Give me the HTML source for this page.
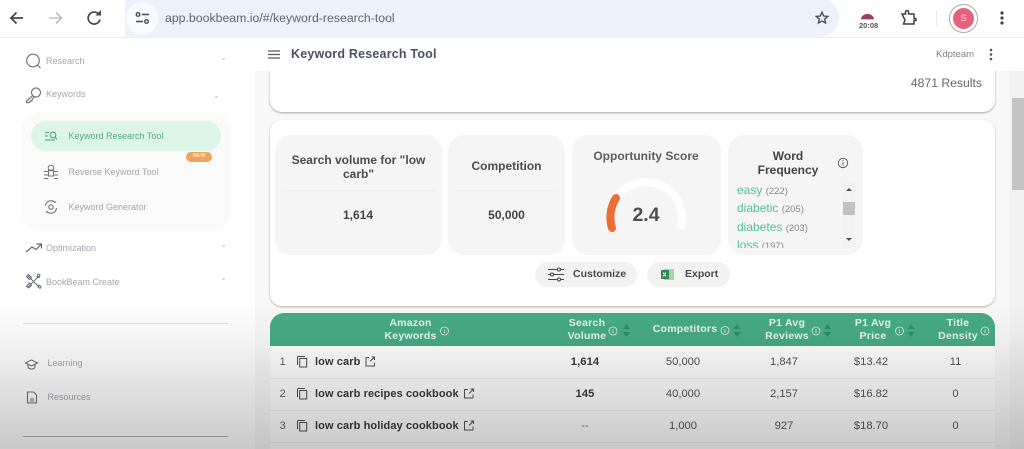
<!DOCTYPE html>
<html><head><meta charset="utf-8">
<style>
*{box-sizing:border-box;margin:0;padding:0}
html,body{width:1024px;height:449px;overflow:hidden;background:#fff;font-family:"Liberation Sans",sans-serif}
#root{position:relative;width:1024px;height:449px;overflow:hidden;filter:blur(.35px)}
.a{position:absolute}
.t{position:absolute;white-space:nowrap;line-height:1}
.c{position:absolute;white-space:nowrap;line-height:1;transform:translateX(-50%);text-align:center}
.stat{position:absolute;background:#f5f5f5;border-radius:16px;top:135px;height:120px}
.h{color:#eaf6f1;font-weight:700;font-size:10.5px;line-height:12.5px;letter-spacing:.25px}
.n{color:#555;font-size:11.2px}
.k{color:#3a3a3a;font-size:11px;font-weight:700;letter-spacing:.1px}
.side{color:#a2a6ae;font-size:9px}
svg{position:absolute;overflow:visible}
</style></head><body>
<div id="root">
<!-- main bg -->
<div class="a" style="left:255px;top:71px;width:755px;height:378px;background:#f8f8f8"></div>
<div class="a" style="left:1010px;top:71px;width:14px;height:378px;background:#f2f2f2"></div>
<div class="a" style="left:1012px;top:98px;width:12px;height:92px;background:#c4c4c4"></div>

<!-- card 1 -->
<div class="a" style="left:270px;top:40px;width:725px;height:72px;background:#fff;border-radius:0 0 12px 12px;box-shadow:0 1px 2px rgba(0,0,0,.35)"></div>
<div class="a" style="left:255px;top:38px;width:769px;height:33px;background:#fff"></div>
<div class="t" style="right:42px;top:77px;font-size:12.200px;color:#666">4871 Results</div>

<!-- browser bar -->
<div class="a" style="left:0;top:0;width:1024px;height:38px;background:#fff;border-bottom:1px solid #eceef0"></div>
<div class="a" style="left:125px;top:-2px;width:714px;height:39px;background:#edf2fa;border-radius:0 20px 20px 0"></div>
<div class="a" style="left:126px;top:2px;width:32px;height:33px;background:#f9fafc;border-radius:50%"></div>
<svg style="left:0;top:0" width="120" height="38" fill="none">
<path d="M23 18H11M16.500 12.500 11 18l5.500 5.500" stroke="#444" stroke-width="1.700"/>
<path d="M61 18H49M56 12.500 61.500 18 56 23.500" stroke="#b3b6ba" stroke-width="1.300"/>
<path d="M99 14.500A6 6 0 1 0 100 19.500" stroke="#444" stroke-width="1.700"/>
<path d="M95.500 15.500h5.500V10z" fill="#444"/>
</svg>
<svg style="left:135px;top:11px" width="16" height="14" fill="none" stroke="#454b54" stroke-width="1.400">
<circle cx="3" cy="3.500" r="1.800"/><path d="M7 3.500h7M1 10.500h7"/><circle cx="11.500" cy="10.500" r="1.800"/>
</svg>
<div class="t" style="left:165px;top:11.500px;font-size:12.300px;color:#5c6673">app.bookbeam.io/#/keyword-research-tool</div>
<svg style="left:815px;top:11px" width="14" height="14" fill="none"><path d="M7 1.200 8.700 5l4.100.4-3.100 2.700.9 4L7 10l-3.600 2.100.9-4L1.200 5.400 5.300 5z" stroke="#46494e" stroke-width="1.300"/></svg>
<svg style="left:858px;top:11px" width="20" height="10"><path d="M3 8.500A6.500 5.500 0 0 1 16 8.500z" fill="#9b3e55"/><path d="M3 8.500h13" stroke="#c7c7c7"/></svg>
<div class="t" style="left:859px;top:21.500px;font-size:7.500px;font-weight:700;color:#555">20:08</div>
<svg style="left:900px;top:9px" width="18" height="18" fill="none"><path d="M2 5h3.500V3a1.500 1.500 0 0 1 3 0v2H14v4.500h2v2h-2V15H3.500L5 11 2 5z" stroke="#3e4146" stroke-width="1.500"/></svg>
<div class="a" style="left:936px;top:10px;width:1px;height:16px;background:#e8e9ea"></div>
<div class="a" style="left:949px;top:4px;width:29px;height:29px;border-radius:50%;background:#fff;border:1px solid #aaa"></div>
<div class="a" style="left:953px;top:8px;width:21px;height:21px;border-radius:50%;background:#e8607f"></div>
<div class="c" style="left:963.500px;top:14px;font-size:9.500px;color:#f8dbe2">S</div>
<svg style="left:999px;top:11px" width="6" height="15" fill="#3d4043"><circle cx="3" cy="2" r="1.600"/><circle cx="3" cy="7" r="1.600"/><circle cx="3" cy="12" r="1.600"/></svg>

<!-- header -->
<svg style="left:268px;top:50px" width="12" height="10" stroke="#565c6b" stroke-width="1.200"><path d="M0 1h12M0 4.500h12M0 8h12"/></svg>
<div class="t" style="left:291px;top:48px;font-size:12.500px;font-weight:700;color:#4a5067;letter-spacing:.2px">Keyword Research Tool</div>
<div class="t" style="left:936px;top:49.500px;font-size:9.500px;color:#7b7f86">Kdpteam</div>
<svg style="left:988px;top:48px" width="6" height="13" fill="#50545c"><circle cx="3" cy="2" r="1.300"/><circle cx="3" cy="6.500" r="1.300"/><circle cx="3" cy="11" r="1.300"/></svg>

<!-- card 2 -->
<div class="a" style="left:270px;top:120px;width:725px;height:186px;background:#fff;border-radius:12px;box-shadow:0 1px 2px rgba(0,0,0,.3)"></div>

<div class="stat" style="left:275px;width:167px"></div>
<div class="stat" style="left:448px;width:117px"></div>
<div class="stat" style="left:572px;width:149px"></div>
<div class="stat" style="left:728px;width:135px"></div>

<div class="c" style="left:358.500px;top:153px;font-size:12px;font-weight:700;color:#4b4b4b;line-height:14px">Search volume for "low<br>carb"</div>
<div class="a" style="left:281px;top:190px;width:155px;height:1px;background:#efefef"></div>
<div class="c" style="left:358px;top:209px;font-size:12px;font-weight:700;color:#444">1,614</div>
<div class="c" style="left:506.500px;top:160px;font-size:12px;font-weight:700;color:#4b4b4b">Competition</div>
<div class="a" style="left:455px;top:190px;width:103px;height:1px;background:#efefef"></div>
<div class="c" style="left:506.500px;top:209px;font-size:12px;font-weight:700;color:#444">50,000</div>

<div class="c" style="left:646px;top:150px;font-size:12px;font-weight:700;color:#5e5e5e">Opportunity Score</div>
<svg style="left:0;top:0" width="1024" height="449" fill="none">
<path d="M611.700 229A36 36 0 1 1 680.300 229" stroke="#fff" stroke-width="8"/>
<path d="M612 228A36 36 0 0 1 616 198" stroke="#ee6c35" stroke-width="8" stroke-linecap="round"/>
</svg>
<div class="c" style="left:646px;top:206px;font-size:19.500px;font-weight:700;color:#4f4f4f">2.4</div>

<div class="c" style="left:788px;top:149px;font-size:12px;font-weight:700;color:#424242;line-height:14px">Word<br>Frequency</div>
<svg style="left:837px;top:157px" width="12" height="12" fill="none" stroke="#555" stroke-width=".9"><circle cx="6" cy="6" r="4.700"/><path d="M6 5.300v3.200M6 3.300v1"/></svg>
<div class="a" style="left:732px;top:182px;width:110px;height:66px;overflow:hidden">
<div class="t" style="left:5px;top:2px;font-size:12px;color:#55bd9e">easy <span style="font-size:9.500px;color:#888">(222)</span></div>
<div class="t" style="left:5px;top:20px;font-size:12px;color:#55bd9e">diabetic <span style="font-size:9.500px;color:#888">(205)</span></div>
<div class="t" style="left:5px;top:38.500px;font-size:12px;color:#55bd9e">diabetes <span style="font-size:9.500px;color:#888">(203)</span></div>
<div class="t" style="left:5px;top:57px;font-size:12px;color:#55bd9e">loss <span style="font-size:9.500px;color:#888">(197)</span></div>
</div>
<div class="a" style="left:843px;top:183px;width:12px;height:64px;background:#f2f2f2"></div>
<div class="a" style="left:843px;top:202px;width:12px;height:13px;background:#c1c1c1"></div>
<svg style="left:845px;top:186px" width="8" height="56" fill="#505050"><path d="M1 5h6L4 2zM1 52h6l-3 3z"/></svg>

<!-- buttons -->
<div class="a" style="left:535px;top:262px;width:102px;height:25px;background:#f2f2f2;border-radius:13px"></div>
<div class="a" style="left:647px;top:262px;width:83px;height:25px;background:#f2f2f2;border-radius:13px"></div>
<svg style="left:548px;top:267px" width="16" height="15" fill="#fff" stroke="#444" stroke-width="1"><path d="M0 2.500h16M0 7.500h16M0 12.500h16"/><circle cx="11" cy="2.500" r="1.500"/><circle cx="4" cy="7.500" r="1.500"/><circle cx="11" cy="12.500" r="1.500"/></svg>
<div class="t" style="left:573px;top:269px;font-size:10.500px;font-weight:700;color:#4a4a4a">Customize</div>
<svg style="left:661px;top:268px" width="13" height="13"><rect x="3" y="1" width="10" height="11" fill="#a8d2b4"/><rect x="0" y="2" width="8" height="9" fill="#2f8a4d"/><path d="M2 4.500l3 4M5 4.500l-3 4" stroke="#fff" stroke-width=".9"/></svg>
<div class="t" style="left:685px;top:269px;font-size:10.500px;font-weight:700;color:#4a4a4a">Export</div>

<!-- table -->
<div class="a" style="left:270px;top:346px;width:725px;height:103px;background:#fff"></div>
<div class="a" style="left:270px;top:378px;width:725px;height:1px;background:#f0f0f0"></div>
<div class="a" style="left:270px;top:410px;width:725px;height:1px;background:#f0f0f0"></div>
<div class="a" style="left:270px;top:442px;width:725px;height:1px;background:#f0f0f0"></div>
<div class="a" style="left:270px;top:313px;width:725px;height:33px;background:#47ab85;border-radius:14px 14px 0 0"></div>

<div class="c h" style="left:410.500px;top:317px">Amazon<br>Keywords</div>
<div class="c h" style="left:587px;top:317px">Search<br>Volume</div>
<div class="c h" style="left:685px;top:323px">Competitors</div>
<div class="c h" style="left:787px;top:317px">P1 Avg<br>Reviews</div>
<div class="c h" style="left:873px;top:317px">P1 Avg<br>Price</div>
<div class="c h" style="left:958px;top:317px">Title<br>Density</div>

<svg style="left:0;top:0" width="1024" height="449" fill="none" stroke="#dff1ea" stroke-width=".8">
<circle cx="444.500" cy="331" r="4"/><path d="M444.500 329.500v3.500"/>
<circle cx="613" cy="331" r="4"/><path d="M613 329.500v3.500"/>
<circle cx="725" cy="330.500" r="4"/><path d="M725 329v3.500"/>
<circle cx="816" cy="331" r="4"/><path d="M816 329.500v3.500"/>
<circle cx="899.500" cy="331" r="4"/><path d="M899.500 329.500v3.500"/>
<circle cx="985" cy="331" r="4"/><path d="M985 329.500v3.500"/>
<g fill="#2f8b68" stroke="none">
<path d="M623 329h7l-3.500-5zM623 332h7l-3.500 5z"/>
<path d="M733.500 329h7l-3.500-5zM733.500 332h7l-3.500 5z"/>
<path d="M824 329h7l-3.500-5zM824 332h7l-3.500 5z"/>
<path d="M907.500 329h7l-3.500-5zM907.500 332h7l-3.500 5z"/>
</g>
</svg>

<!-- rows -->
<div class="t n" style="left:279.500px;top:357px;color:#666">1</div>
<div class="t n" style="left:279.500px;top:389px;color:#666">2</div>
<div class="t n" style="left:279.500px;top:421px;color:#666">3</div>
<svg style="left:0;top:0" width="1024" height="449" fill="none" stroke="#4e4e4e" stroke-width="1">
<path d="M298 356.500h7M297.500 365v-8.500"/><rect x="299.700" y="358.500" width="7" height="8.500"/>
<path d="M298 388.500h7M297.500 397v-8.500"/><rect x="299.700" y="390.500" width="7" height="8.500"/>
<path d="M298 420.500h7M297.500 429v-8.500"/><rect x="299.700" y="422.500" width="7" height="8.500"/>
<g stroke="#555">
<path d="M369 357.500h-3v8.500h8.500V362.500M370 361.500l4.500-4.500M371.500 357h3v3"/>
<path d="M468 389.500h-3.500v8.500h8.500V394.500M469 393.500l4.500-4.500M470.500 389h3v3"/>
<path d="M468 421.500h-3.500v8.500h8.500V426.500M469 425.500l4.500-4.500M470.500 421h3v3"/>
</g>
</svg>
<div class="t k" style="left:315px;top:357px">low carb</div>
<div class="t k" style="left:315px;top:389px">low carb recipes cookbook</div>
<div class="t k" style="left:315px;top:421px">low carb holiday cookbook</div>

<div class="c k" style="left:585px;top:357px;font-size:11.200px">1,614</div>
<div class="c k" style="left:585px;top:389px;font-size:11.200px">145</div>
<div class="c k" style="left:585px;top:421px;font-weight:400;color:#666">--</div>

<div class="c n" style="left:683px;top:357px">50,000</div>
<div class="c n" style="left:683px;top:389px">40,000</div>
<div class="c n" style="left:683px;top:421px">1,000</div>
<div class="c n" style="left:784px;top:357px">1,847</div>
<div class="c n" style="left:784px;top:389px">2,157</div>
<div class="c n" style="left:784px;top:421px">927</div>
<div class="c n" style="left:871px;top:357px">$13.42</div>
<div class="c n" style="left:871px;top:389px">$16.82</div>
<div class="c n" style="left:871px;top:421px">$18.70</div>
<div class="c n" style="left:955.500px;top:357px">11</div>
<div class="c n" style="left:955.500px;top:389px">0</div>
<div class="c n" style="left:955.500px;top:421px">0</div>

<!-- sidebar -->
<svg style="left:0;top:0" width="255" height="449" fill="none" stroke="#6d7480" stroke-width="1.200">
<circle cx="33" cy="60.500" r="6.300"/><path d="M37.500 65l3 3"/>
<circle cx="36" cy="92.500" r="4.500"/><path d="M32.800 95.700l-6.300 5.300v1.500h3l1-1.500h1.500v-1.500l2.500-2.500"/>
<path d="M222 58.500l1.500 1 1.500-1M215 97.500l1.500-1 1.500 1" stroke="#b6babf" stroke-width=".8"/>
<path d="M222 245.500l1.500 1 1.500-1M222 278.500l1.500 1 1.500-1" stroke="#b6babf" stroke-width=".8"/>
</svg>
<div class="t side" style="left:46px;top:56.500px">Research</div>
<div class="t side" style="left:46px;top:90px">Keywords</div>

<div class="a" style="left:22px;top:112px;width:208px;height:119px;background:#fafafa;border-radius:18px"></div>
<div class="a" style="left:31px;top:121px;width:190px;height:30px;background:#dcf5e7;border-radius:15px"></div>
<svg style="left:0;top:0" width="255" height="449" fill="none">
<g stroke="#4ca57e" stroke-width="1.100"><path d="M45 132.500h4M45 136h3M45 140h10"/><circle cx="53" cy="135" r="2.800"/><path d="M55 137l2 2.500"/></g>
<g stroke="#6b7280" stroke-width="1"><circle cx="51" cy="168" r="2.800"/><rect x="48.500" y="170" width="5" height="6"/><path d="M44 171.500h4M44 175h4M44 178.500h4M54 171.500h4M54 175h4M54 178.500h4"/></g>
<g stroke="#6b7280" stroke-width="1.100"><circle cx="51" cy="207" r="2.200"/><path d="M45.500 206a5.500 5.500 0 0 1 9.500-3.500l1-1M56.500 208a5.500 5.500 0 0 1-9.500 3.500l-1 1"/></g>
<g stroke="#5e6672" stroke-width="1.200"><path d="M26 252l6-5 4 2.500 5-5M36.500 244h5v4.500"/></g>
<g stroke="#626a76" stroke-width="1"><path d="M28 276l11 11M39 276l-11 11M26.500 276.500l2-2 3 3-2 2zM38 287l2 1.500 1-2-2-1.500zM40 275l-2-1-1 2.500 2 1zM26.500 286l2 2 3-2.500-2-2.500z"/></g>
<g stroke="#6e7480" stroke-width="1.100"><path d="M25.500 363l6-3 6 3-6 3zM28 364.500v2.500a3.500 2 0 0 0 7 0v-2.500"/></g>
<g stroke="#6e7480" stroke-width="1.100"><path d="M27.500 392h6l3 3v8h-9zM30 399h4M30 401h4"/></g>
</svg>
<div class="t" style="left:68.500px;top:132px;font-size:9px;color:#58a985">Keyword Research Tool</div>
<div class="t side" style="left:68.500px;top:167.500px">Reverse Keyword Tool</div>
<div class="t side" style="left:68.500px;top:202.500px">Keyword Generator</div>
<div class="a" style="left:186px;top:152px;width:26px;height:10px;background:#eda55c;border-radius:5px"></div>
<div class="c" style="left:199px;top:154px;font-size:5.500px;font-weight:700;color:#fbe9d3">NEW</div>
<div class="t side" style="left:46px;top:244px">Optimization</div>
<div class="t side" style="left:46px;top:277.500px">BookBeam Create</div>
<div class="a" style="left:23px;top:323px;width:205px;height:1px;background:#e0e0e0"></div>
<div class="t side" style="left:47.500px;top:359px">Learning</div>
<div class="t side" style="left:47.500px;top:392.500px">Resources</div>
<div class="a" style="left:23px;top:436px;width:205px;height:1px;background:#b5b5b5"></div>

<!-- video bottom shade -->
<div class="a" style="left:0;top:300px;width:1024px;height:149px;background:linear-gradient(to bottom,rgba(0,0,0,0) 0,rgba(0,0,0,.04) 25%,rgba(0,0,0,.12) 60%,rgba(0,0,0,.21) 100%)"></div>
</div>
</body></html>
